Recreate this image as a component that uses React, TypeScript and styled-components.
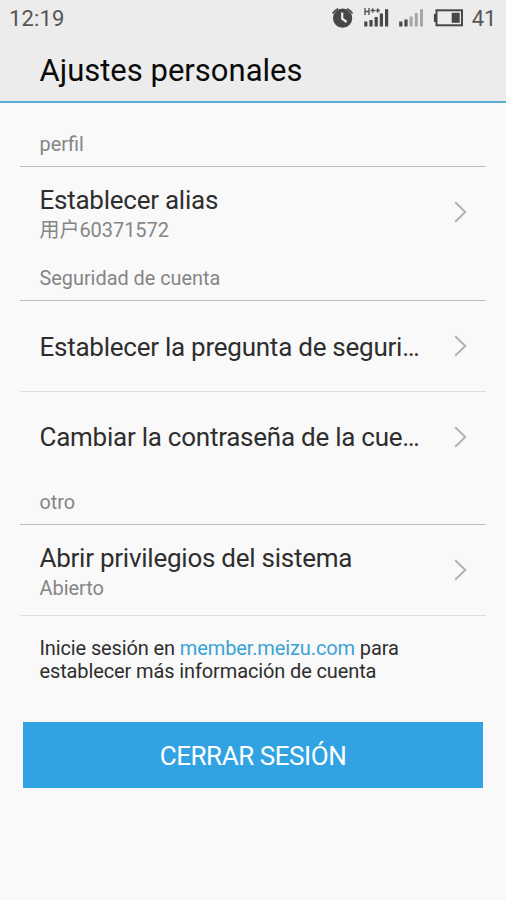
import React from "react";
import styled, { createGlobalStyle } from "styled-components";

const GlobalStyle = createGlobalStyle`
  * { box-sizing: border-box; }
  body {
    margin: 0;
    background: #f9f9f9;
    font-family: Roboto, "Noto Sans CJK SC", sans-serif;
  }
`;

const Screen = styled.div`
  width: 506px;
  height: 900px;
  overflow: hidden;
  display: flex;
  flex-direction: column;
  background: #f9f9f9;
`;

const TopArea = styled.header`
  flex: none;
  height: 103px;
  background: #ececec;
  border-bottom: 2px solid #5aacd3;
`;

const StatusBar = styled.div`
  height: 37px;
  padding: 0 10px 0 9px;
  display: flex;
  align-items: center;
  justify-content: space-between;
  font-size: 22px;
  color: #555;
`;

const Clock = styled.span`
  letter-spacing: 0.15px;
`;

const StatusIcons = styled.div`
  display: flex;
  align-items: center;
  height: 37px;

  svg { display: block; }
`;

const BatteryLevel = styled.span`
  margin-left: 6px;
  letter-spacing: -0.3px;
`;

const Title = styled.h1`
  margin: 16px 0 0 39.5px;
  font-size: 31px;
  font-weight: 400;
  line-height: 35px;
  color: #0a0a0a;
`;

const SectionLabel = styled.h2<{ $height: number }>`
  flex: none;
  height: ${(p) => p.$height}px;
  margin: 0 20px;
  padding: 0 19.5px 9px;
  display: flex;
  align-items: flex-end;
  border-bottom: 1px solid #bdbdbd;
  font-size: 19.85px;
  font-weight: 400;
  line-height: 24px;
  color: #858585;
`;

const Row = styled.div<{ $height: number; $divided?: boolean }>`
  flex: none;
  height: ${(p) => p.$height}px;
  margin: 0 20px;
  padding: 0 19px 0 19.5px;
  display: flex;
  align-items: center;
  justify-content: space-between;
  border-bottom: ${(p) => (p.$divided ? "1px solid #dedede" : "none")};
`;

const RowText = styled.div<{ $double?: boolean }>`
  padding-top: ${(p) => (p.$double ? 7 : 1)}px;
`;

const RowTitle = styled.div`
  font-size: 26px;
  line-height: 30px;
  letter-spacing: -0.25px;
  color: #2e2e2e;
  white-space: nowrap;
`;

const RowDetail = styled.div`
  font-size: 20px;
  line-height: 31px;
  letter-spacing: -0.05px;
  color: #858585;
`;

const Note = styled.p`
  flex: none;
  margin: 21px 39px 0 39.5px;
  font-size: 20px;
  line-height: 23px;
  letter-spacing: -0.12px;
  color: #2e2e2e;
`;

const Link = styled.a`
  color: #39a3d6;
  text-decoration: none;
`;

const LogoutButton = styled.button`
  flex: none;
  width: 460px;
  height: 66px;
  margin: 39px 23px 0;
  padding: 2px 0 0;
  border: 0;
  background: #31a3e3;
  color: #fff;
  font: 400 26px Roboto, sans-serif;
  letter-spacing: -0.45px;
`;

const Chevron = () => (
  <svg width="13" height="22" viewBox="0 0 13 22" fill="none">
    <path d="M1.2 1.2L11.3 11L1.2 20.8" stroke="#b3b3b3" strokeWidth="2" />
  </svg>
);

const StatusGlyphs = () => (
  <svg width="136" height="37" viewBox="330 0 136 37">
    <circle cx="342.6" cy="18.2" r="9.6" fill="#474747" />
    <path
      d="M332.7 13.4A13 13 0 0 1 338.2 8.8M352.5 13.4A13 13 0 0 0 347 8.8"
      fill="none"
      stroke="#474747"
      strokeWidth="1.8"
    />
    <path d="M342.2 12.5V18.7L346.6 22" fill="none" stroke="#ececec" strokeWidth="2.2" />
    <path
      d="M365 8V15M369 8V15M365 11.5H369M370.5 10.5H375M372.75 8.2V12.8M375.5 10.5H380M377.75 8.2V12.8"
      stroke="#555"
      strokeWidth="1.4"
      fill="none"
    />
    <g fill="#474747">
      <rect x="364.2" y="21.5" width="3.2" height="5" />
      <rect x="369.4" y="20" width="3.2" height="6.5" />
      <rect x="374.6" y="17" width="3.2" height="9.5" />
      <rect x="379.8" y="13.5" width="3.2" height="13" />
      <rect x="385" y="9.2" width="3.2" height="17.3" />
      <rect x="399.2" y="21.5" width="3.2" height="5" />
      <rect x="404.4" y="19.5" width="3.2" height="7" />
    </g>
    <g fill="#a6a6a6">
      <rect x="409.6" y="16.5" width="3" height="10" />
      <rect x="414.8" y="13" width="3" height="13.5" />
      <rect x="420" y="9.2" width="3" height="17.3" />
    </g>
    <rect x="436.5" y="10.3" width="25.5" height="15" fill="none" stroke="#474747" strokeWidth="2" />
    <rect x="433.9" y="14" width="2.2" height="8" fill="#474747" />
    <rect x="451.7" y="12.8" width="8" height="10" fill="#474747" />
  </svg>
);

type SettingProps = { title: string; detail?: string; divided?: boolean; height: number };

const Setting = ({ title, detail, divided, height }: SettingProps) => (
  <Row $height={height} $divided={divided}>
    <RowText $double={!!detail}>
      <RowTitle>{title}</RowTitle>
      {detail && <RowDetail>{detail}</RowDetail>}
    </RowText>
    <Chevron />
  </Row>
);

export default function App() {
  return (
    <Screen>
      <GlobalStyle />
      <TopArea>
        <StatusBar>
          <Clock>12:19</Clock>
          <StatusIcons>
            <StatusGlyphs />
            <BatteryLevel>41</BatteryLevel>
          </StatusIcons>
        </StatusBar>
        <Title>Ajustes personales</Title>
      </TopArea>
      <SectionLabel $height={64}>perfil</SectionLabel>
      <Setting title="Establecer alias" detail="用户60371572" height={90} />
      <SectionLabel $height={44}>Seguridad de cuenta</SectionLabel>
      <Setting title="Establecer la pregunta de seguri…" height={91} divided />
      <Setting title="Cambiar la contraseña de la cue…" height={89} />
      <SectionLabel $height={44}>otro</SectionLabel>
      <Setting title="Abrir privilegios del sistema" detail="Abierto" height={91} divided />
      <Note>
        Inicie sesión en <Link>member.meizu.com</Link> para establecer más información de cuenta
      </Note>
      <LogoutButton>CERRAR SESIÓN</LogoutButton>
    </Screen>
  );
}
